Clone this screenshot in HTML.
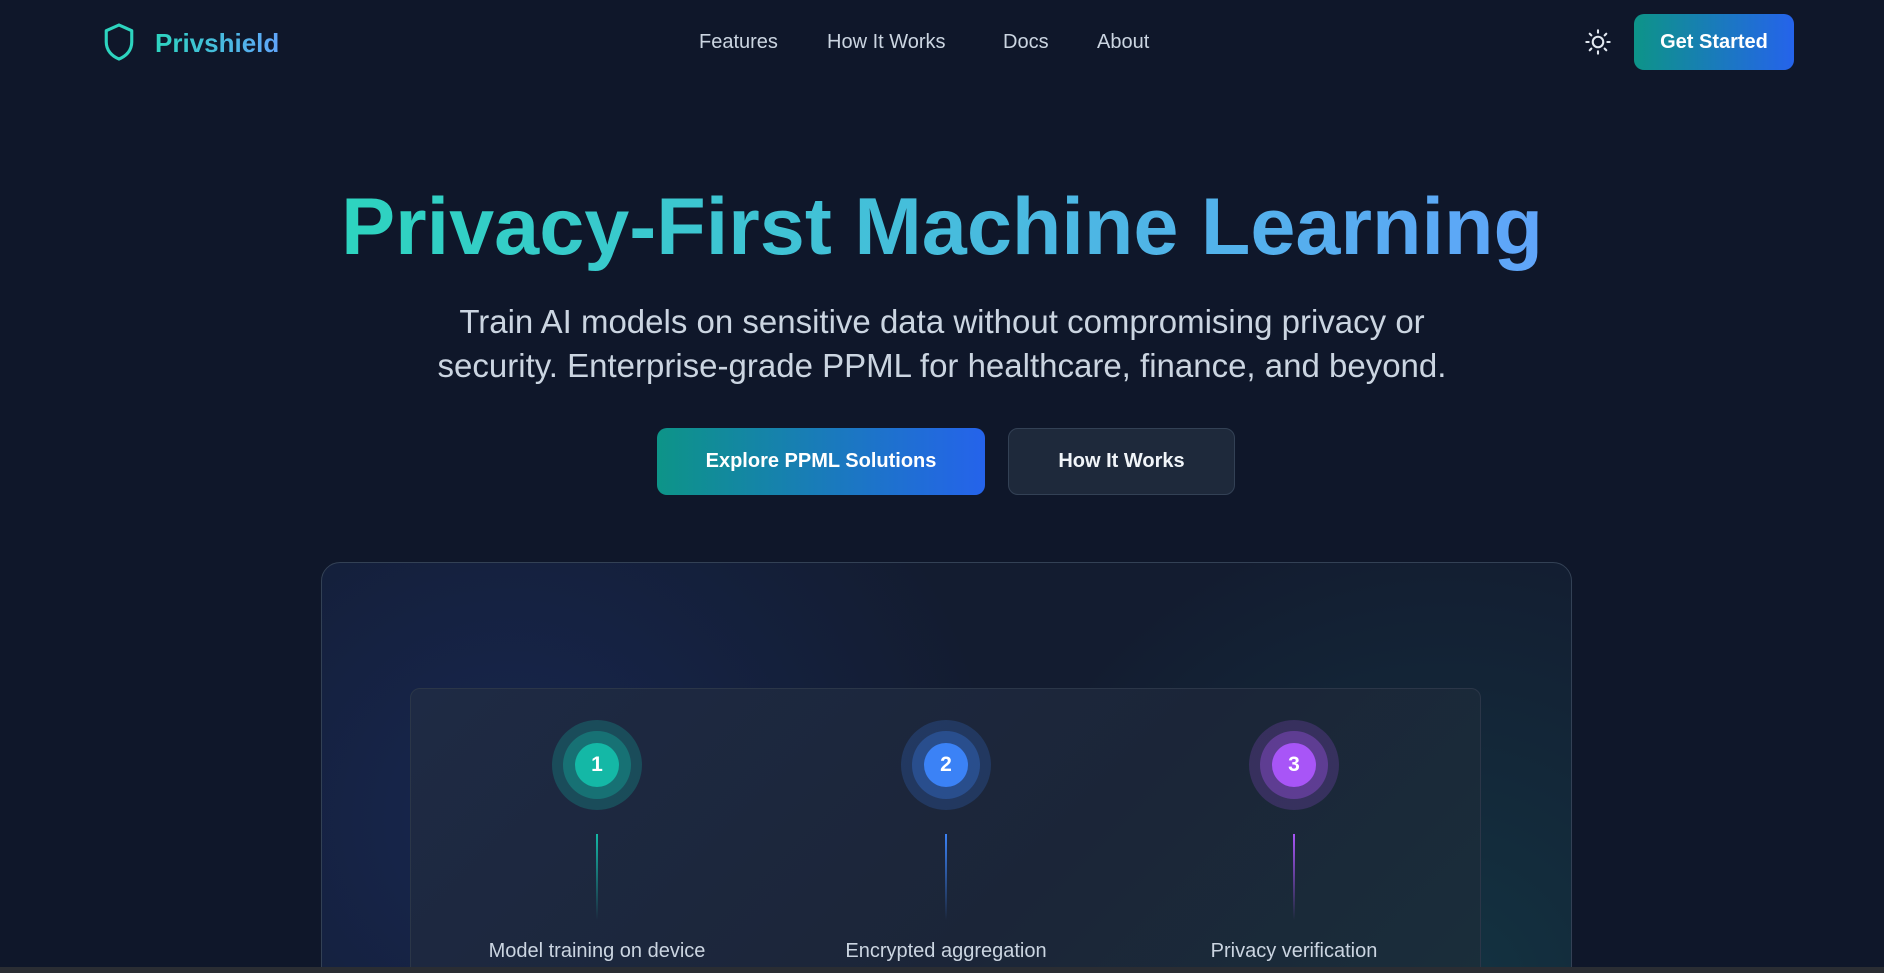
<!DOCTYPE html>
<html><head><meta charset="utf-8"><style>
*{margin:0;padding:0;box-sizing:border-box}
html,body{width:1884px;height:973px;overflow:hidden}
body{background:#0f172a;font-family:"Liberation Sans",sans-serif;position:relative;color:#e2e8f0}
#w{position:absolute;left:0;top:0;width:1884px;height:973px;overflow:hidden}
.abs{position:absolute}
.nav a{position:absolute;top:31px;font-size:20px;color:#cbd5e1;text-decoration:none}
.btn{position:absolute;border-radius:10px;font-weight:bold;font-size:20px;color:#fff;display:flex;align-items:center;justify-content:center}
.circ{position:absolute;width:90px;height:90px;border-radius:50%;display:flex;align-items:center;justify-content:center}
.circ div{width:68px;height:68px;border-radius:50%;display:flex;align-items:center;justify-content:center}
.circ span{width:44px;height:44px;border-radius:50%;display:flex;align-items:center;justify-content:center;color:#fff;font-weight:bold;font-size:21px}
.line{position:absolute;width:2px;height:86px;top:834px}
.lab{position:absolute;top:940px;width:360px;text-align:center;font-size:20px;color:#cbd5e1}
</style></head><body><div id="w">
<svg class="abs" style="left:102px;top:22px" width="34" height="40" viewBox="0 0 24 28"><path d="M12 2 L21 6 V14 C21 20 17 24 12 26 C7 24 3 20 3 14 V6 Z" fill="none" stroke="#2dd4bf" stroke-width="2.2" stroke-linejoin="round"/></svg>
<div class="abs" style="left:155px;top:28px;font-size:26px;font-weight:bold;background:linear-gradient(90deg,#2dd4bf,#60a5fa);-webkit-background-clip:text;color:transparent">Privshield</div>
<div class="nav"><a style="left:699px">Features</a><a style="left:827px">How It Works</a><a style="left:1003px">Docs</a><a style="left:1097px">About</a></div>
<svg class="abs" style="left:1584px;top:28px" width="28" height="28" viewBox="0 0 24 24" fill="none" stroke="#e2e8f0" stroke-width="1.8" stroke-linecap="round"><circle cx="12" cy="12" r="4.5"/><path d="M12 2v2M12 20v2M2 12h2M20 12h2M4.9 4.9l1.4 1.4M17.7 17.7l1.4 1.4M4.9 19.1l1.4-1.4M17.7 6.3l1.4-1.4"/></svg>
<div class="btn" style="left:1634px;top:14px;width:160px;height:56px;background:linear-gradient(90deg,#0d9488,#2563eb)">Get Started</div>
<div class="abs" style="left:0;width:1884px;top:177px;text-align:center;font-size:81px;font-weight:bold;line-height:100px"><span style="background:linear-gradient(90deg,#2dd4bf,#60a5fa);-webkit-background-clip:text;color:transparent">Privacy-First Machine Learning</span></div>
<div class="abs" style="left:0;width:1884px;top:300px;text-align:center;font-size:33px;line-height:44px;color:#cbd5e1">Train AI models on sensitive data without compromising privacy or<br>security. Enterprise-grade PPML for healthcare, finance, and beyond.</div>
<div class="btn" style="left:657px;top:428px;width:328px;height:67px;background:linear-gradient(90deg,#0d9488,#2563eb)">Explore PPML Solutions</div>
<div class="btn" style="left:1008px;top:428px;width:227px;height:67px;background:#1e293b;border:1px solid #334155;color:#f1f5f9">How It Works</div>
<div class="abs" style="left:321px;top:562px;width:1251px;height:430px;border-radius:19px;border:1px solid #334155;background:radial-gradient(circle at 15% 60%,rgba(30,58,138,.35),transparent 45%),radial-gradient(circle at 90% 100%,rgba(20,184,166,.15),transparent 40%),#131c30"></div>
<div class="abs" style="left:410px;top:688px;width:1071px;height:300px;border-radius:10px;border:1px solid #2b3648;background:linear-gradient(135deg,#1e2a44,#1b2538 60%,#1a2e3a)"></div>
<div class="circ" style="left:552px;top:720px;background:rgba(20,184,166,.25)"><div style="background:rgba(20,184,166,.35)"><span style="background:#14b8a6">1</span></div></div>
<div class="circ" style="left:901px;top:720px;background:rgba(59,130,246,.2)"><div style="background:rgba(59,130,246,.3)"><span style="background:#3b82f6">2</span></div></div>
<div class="circ" style="left:1249px;top:720px;background:rgba(168,85,247,.2)"><div style="background:rgba(168,85,247,.35)"><span style="background:#a855f7">3</span></div></div>
<div class="line" style="left:596px;background:linear-gradient(#14b8a6,transparent)"></div>
<div class="line" style="left:945px;background:linear-gradient(#3b82f6,transparent)"></div>
<div class="line" style="left:1293px;background:linear-gradient(#a855f7,transparent)"></div>
<div class="lab" style="left:417px">Model training on device</div>
<div class="lab" style="left:766px">Encrypted aggregation</div>
<div class="lab" style="left:1114px">Privacy verification</div>
<div class="abs" style="left:0;top:967px;width:1884px;height:6px;background:#2a2d33"></div>
</div></body></html>
